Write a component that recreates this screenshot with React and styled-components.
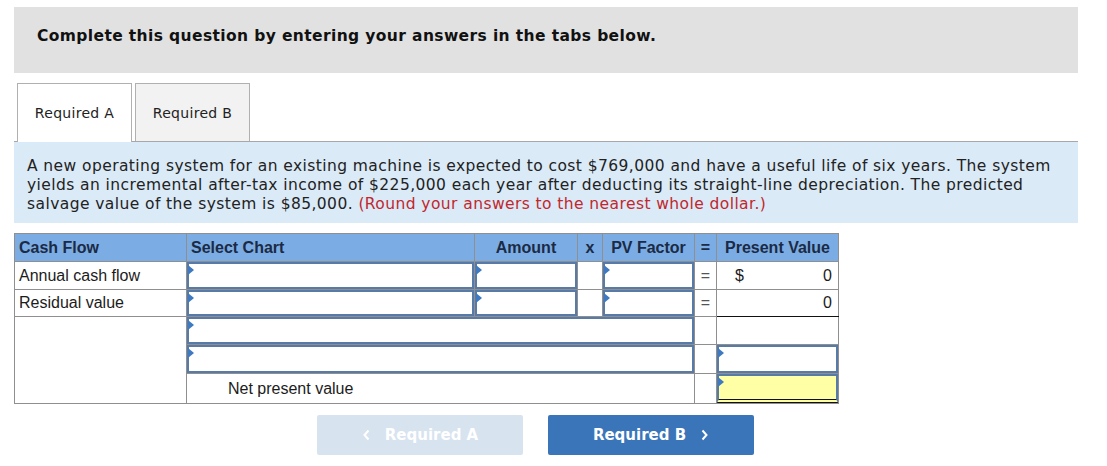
import React from "react";
import styled, { createGlobalStyle, css } from "styled-components";

const Global = createGlobalStyle`
  html, body { margin: 0; padding: 0; background: #fff; }
  body { font-family: "DejaVu Sans", Verdana, sans-serif; }
`;

const Page = styled.div`
  padding: 7px 29px 0 14px;
  width: 1064px;
`;

const Banner = styled.div`
  background: #e1e1e1;
  height: 66px;
  display: flex;
  align-items: center;
  padding-left: 23px;
  padding-bottom: 9px;
  box-sizing: border-box;
  font-weight: bold;
  font-size: 15.5px;
  letter-spacing: 0.38px;
  color: #111;
`;

const TabBar = styled.div`
  margin-top: 10px;
  display: flex;
  gap: 3px;
  padding-left: 3px;
  border-bottom: 1px solid #a8a8a8;
  height: 58px;
`;

const Tab = styled.div`
  width: 115px;
  box-sizing: border-box;
  border: 1px solid #b0b0b0;
  border-bottom: none;
  display: flex;
  align-items: center;
  justify-content: center;
  font-size: 14px;
  letter-spacing: 0.3px;
  color: #222;
  background: ${(p) => (p.$active ? "#fff" : "#f2f2f2")};
  ${(p) =>
    p.$active &&
    css`
      height: 59px;
      margin-bottom: -1px;
    `}
`;

const Prompt = styled.div`
  background: #dbeaf7;
  padding: 15px 13px 9px 13px;
  font-size: 15.5px;
  letter-spacing: 0.42px;
  line-height: 19px;
  color: #222;
  white-space: nowrap;
`;

const Red = styled.span`
  color: #c1272d;
`;

const Table = styled.table`
  margin-top: 10px;
  border-collapse: collapse;
  table-layout: fixed;
  width: 824px;
  font-family: "Liberation Sans", Arial, sans-serif;
  font-size: 16px;
  color: #1c1c1c;
`;

const Th = styled.th`
  background: #7badE4;
  color: #1b2a45;
  font-weight: bold;
  font-size: 16px;
  height: 27px;
  padding: 0 4px;
  border: 1px solid #8f8f8f;
  text-align: ${(p) => p.$align || "left"};
`;

const Td = styled.td`
  border: 1px solid #8f8f8f;
  padding: 0;
  height: ${(p) => p.$h || 27}px;
  vertical-align: middle;
  background: #fff;
`;

const LabelCell = styled(Td)`
  padding-left: 4px;
`;

const EqCell = styled(Td)`
  text-align: center;
  color: #555;
`;

const ValueCell = styled(Td)`
  padding: 0 6px 0 18px;
  ${(p) =>
    p.$underline &&
    css`
      border-bottom: 1.5px solid #111;
    `}
`;

const ValueRow = styled.div`
  display: flex;
  justify-content: space-between;
`;

const Field = styled.div`
  position: relative;
  box-sizing: border-box;
  height: ${(p) => p.$h || 27}px;
  border: 2px solid #587aa6;
  background: ${(p) => (p.$yellow ? "#ffffa6" : "#fff")};
  ${(p) =>
    p.$double &&
    css`
      border-bottom: 4px double #111;
    `}
  &::before {
    content: "";
    position: absolute;
    left: -1px;
    top: 1px;
    border-left: 6px solid #3f79c0;
    border-top: 5px solid transparent;
    border-bottom: 5px solid transparent;
  }
`;

const NetLabel = styled(Td)`
  padding-left: 41px;
`;

const Nav = styled.div`
  display: flex;
  gap: 25px;
  margin: 11px 0 0 303px;
`;

const NavButton = styled.button`
  width: 206px;
  height: 40px;
  border: none;
  border-radius: 2px;
  font-family: "DejaVu Sans", Verdana, sans-serif;
  font-weight: bold;
  font-size: 15px;
  color: #fff;
  display: flex;
  align-items: center;
  justify-content: center;
  gap: 14px;
  background: ${(p) => (p.disabled ? "#d8e3f0" : "#3a74b9")};
`;

const Chevron = styled.svg`
  width: 9px;
  height: 12px;
`;

const Left = () => (
  <Chevron viewBox="0 0 9 12">
    <path d="M6.5 1.5 L2.5 6 L6.5 10.5" stroke="#fff" strokeWidth="2" fill="none" />
  </Chevron>
);
const Right = () => (
  <Chevron viewBox="0 0 9 12">
    <path d="M2.5 1.5 L6.5 6 L2.5 10.5" stroke="#fff" strokeWidth="2" fill="none" />
  </Chevron>
);

export default function App() {
  return (
    <>
      <Global />
      <Page>
        <Banner>Complete this question by entering your answers in the tabs below.</Banner>
        <TabBar>
          <Tab $active>Required A</Tab>
          <Tab>Required B</Tab>
        </TabBar>
        <Prompt>
          A new operating system for an existing machine is expected to cost $769,000 and have a
          useful life of six years. The system
          <br />
          yields an incremental after-tax income of $225,000 each year after deducting its
          straight-line depreciation. The predicted
          <br />
          salvage value of the system is $85,000.{" "}
          <Red>(Round your answers to the nearest whole dollar.)</Red>
        </Prompt>
        <Table>
          <colgroup>
            <col style={{ width: 172 }} />
            <col style={{ width: 288 }} />
            <col style={{ width: 103 }} />
            <col style={{ width: 25 }} />
            <col style={{ width: 92 }} />
            <col style={{ width: 22 }} />
            <col style={{ width: 122 }} />
          </colgroup>
          <thead>
            <tr>
              <Th>Cash Flow</Th>
              <Th>Select Chart</Th>
              <Th $align="center">Amount</Th>
              <Th $align="center">x</Th>
              <Th $align="center">PV Factor</Th>
              <Th $align="center">=</Th>
              <Th $align="center">Present Value</Th>
            </tr>
          </thead>
          <tbody>
            <tr>
              <LabelCell $h={27}>Annual cash flow</LabelCell>
              <Td $h={27}><Field $h={27} /></Td>
              <Td $h={27}><Field $h={27} /></Td>
              <Td $h={27} />
              <Td $h={27}><Field $h={27} /></Td>
              <EqCell $h={27}>=</EqCell>
              <ValueCell $h={27}>
                <ValueRow><span>$</span><span>0</span></ValueRow>
              </ValueCell>
            </tr>
            <tr>
              <LabelCell $h={26}>Residual value</LabelCell>
              <Td $h={26}><Field $h={26} /></Td>
              <Td $h={26}><Field $h={26} /></Td>
              <Td $h={26} />
              <Td $h={26}><Field $h={26} /></Td>
              <EqCell $h={26}>=</EqCell>
              <ValueCell $h={26} $underline>
                <ValueRow><span /><span>0</span></ValueRow>
              </ValueCell>
            </tr>
            <tr>
              <Td rowSpan={3} />
              <Td colSpan={4} $h={27}><Field $h={27} /></Td>
              <Td $h={27} />
              <Td $h={27} />
            </tr>
            <tr>
              <Td colSpan={4} $h={28}><Field $h={28} /></Td>
              <Td $h={28} />
              <Td $h={28}><Field $h={28} /></Td>
            </tr>
            <tr>
              <NetLabel colSpan={4} $h={29}>Net present value</NetLabel>
              <Td $h={29} />
              <Td $h={29}><Field $h={29} $yellow $double /></Td>
            </tr>
          </tbody>
        </Table>
        <Nav>
          <NavButton disabled><Left />Required A</NavButton>
          <NavButton>Required B<Right /></NavButton>
        </Nav>
      </Page>
    </>
  );
}
